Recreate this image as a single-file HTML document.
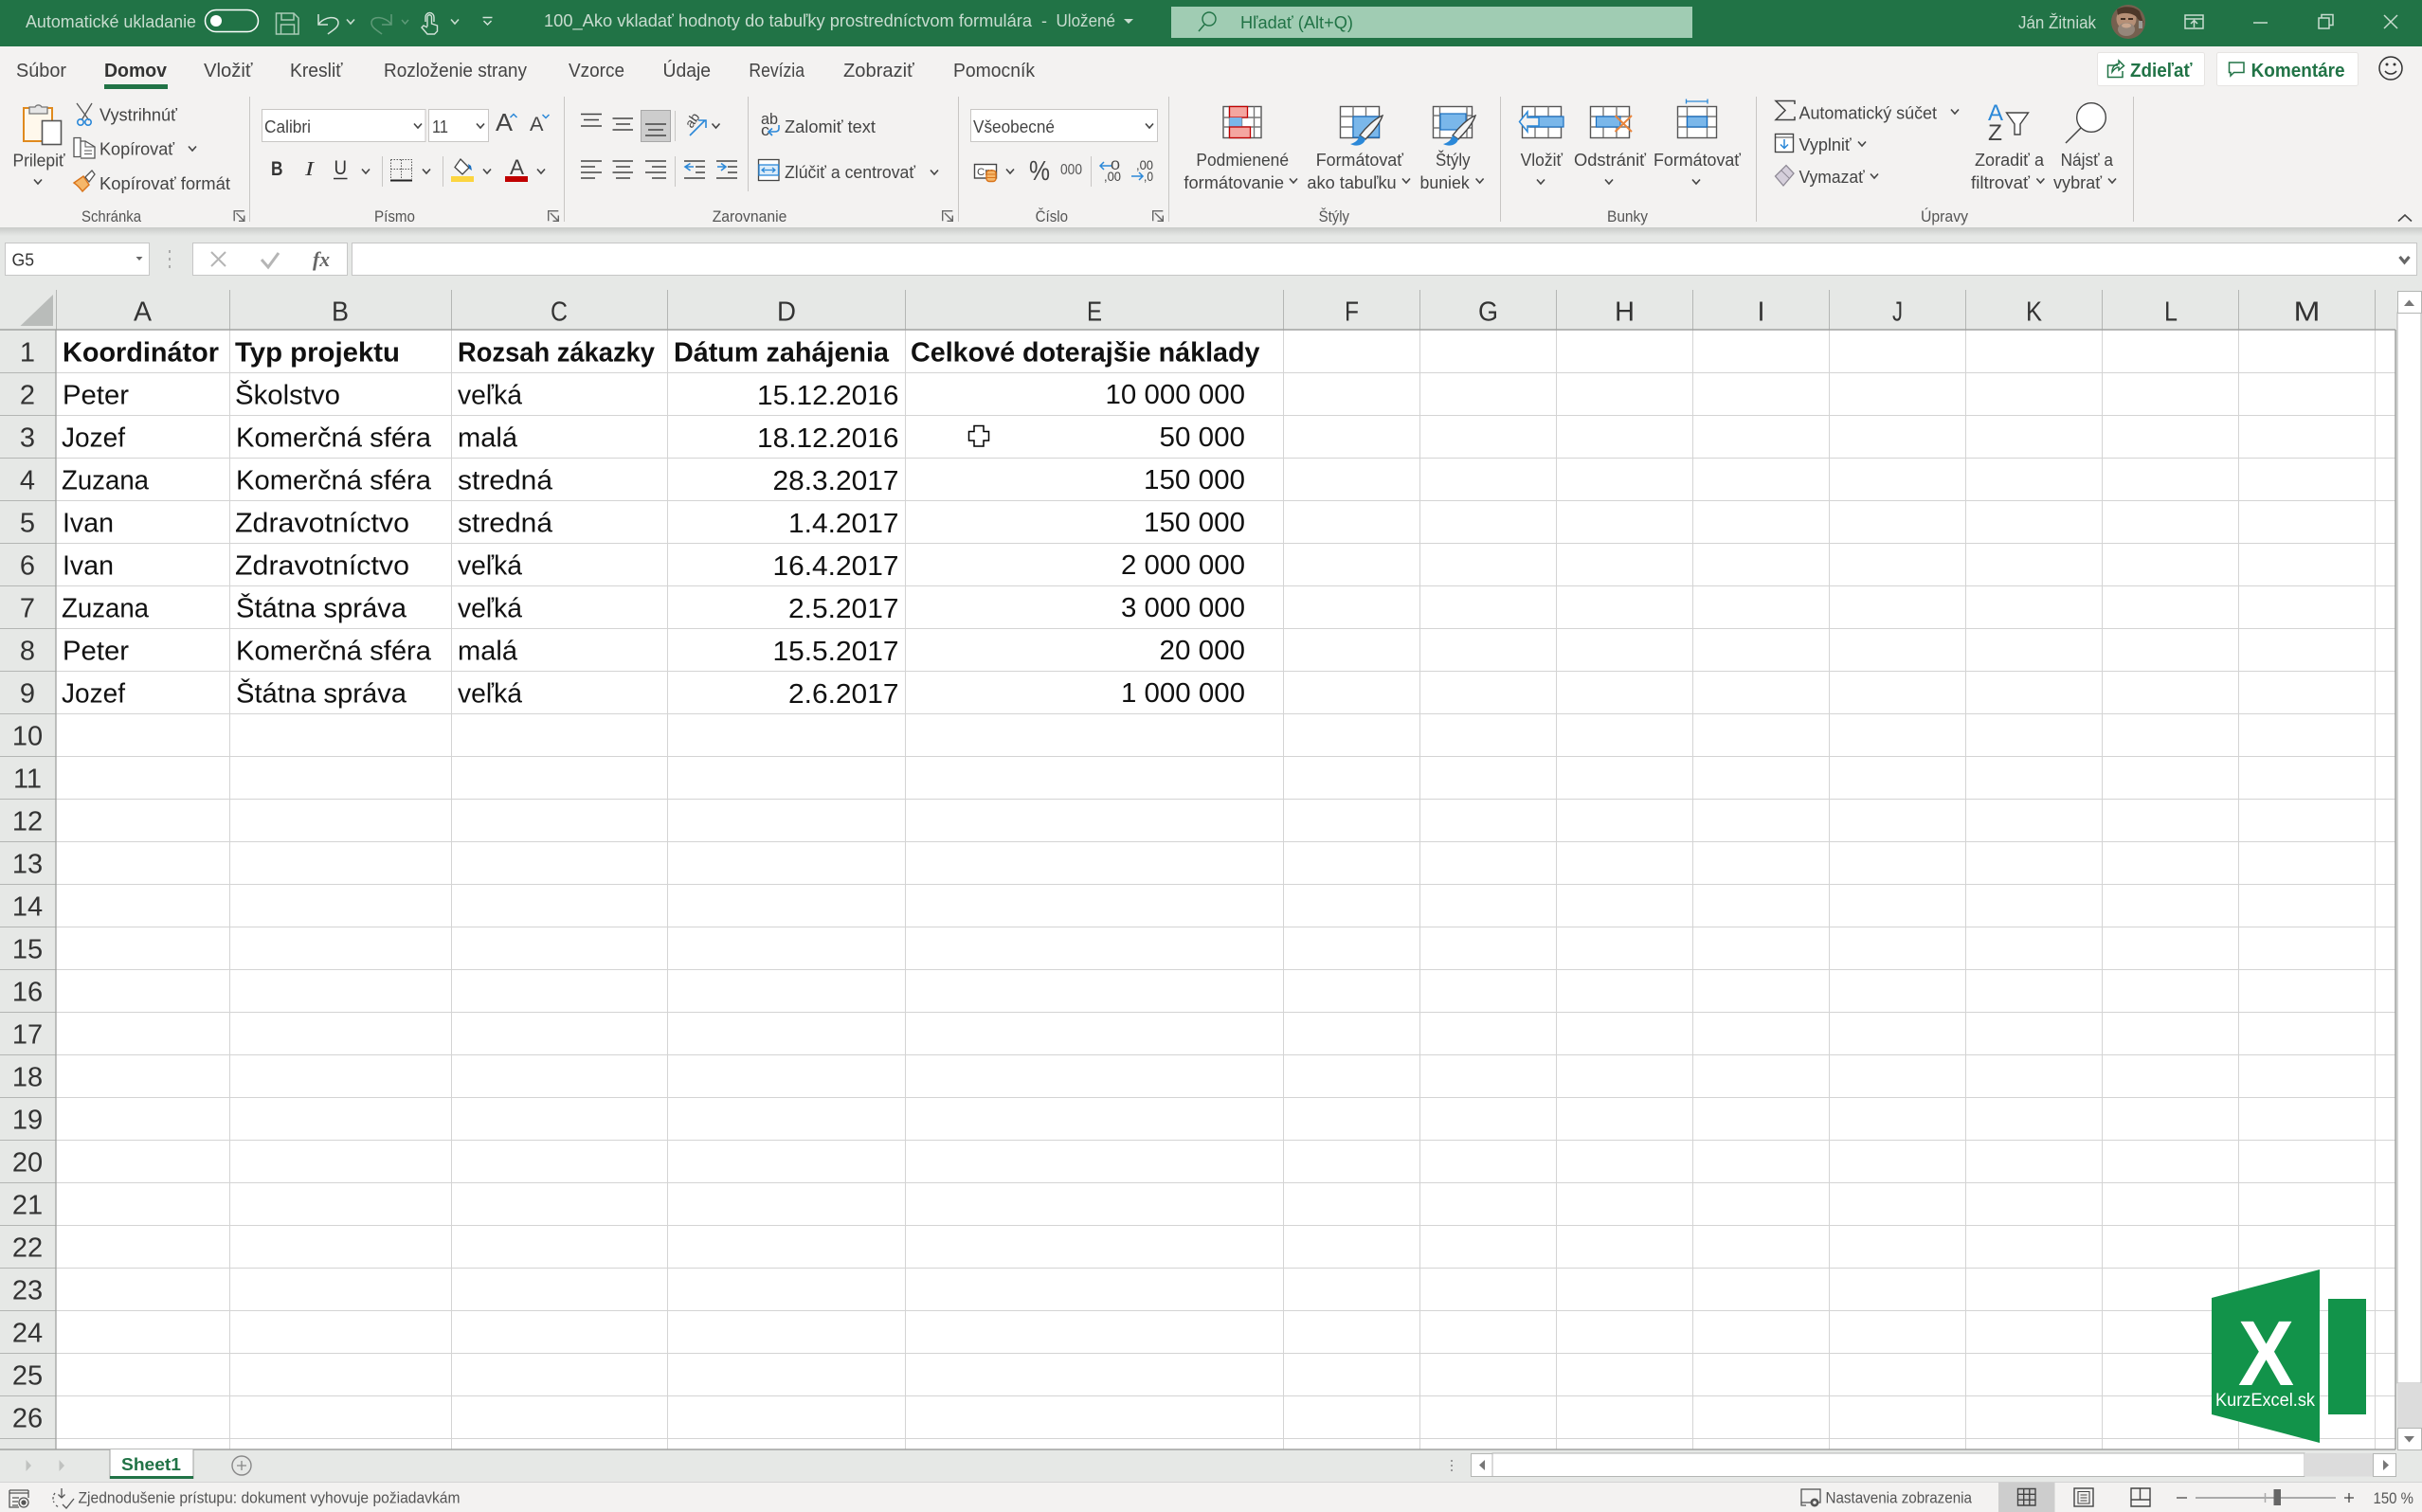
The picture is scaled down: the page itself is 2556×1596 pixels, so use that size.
<!DOCTYPE html>
<html lang="sk"><head><meta charset="utf-8"><title>Excel</title>
<style>
html,body{margin:0;padding:0;background:#fff;width:2556px;height:1596px;overflow:hidden}
svg{display:block}
text{font-family:"Liberation Sans",sans-serif;white-space:pre}
.r text{font-size:18px;fill:#444}
.t text{font-size:18px;fill:#c8dccf}
.m text{font-size:20px;fill:#444}
.g text{font-size:16.5px;fill:#555}
.c text{font-size:29px;fill:#111}
.b text{font-weight:bold}
.h text{font-size:29px;fill:#333}
.s text{font-size:16.5px;fill:#555}
</style></head><body>
<svg xmlns="http://www.w3.org/2000/svg" width="2556" height="1596" viewBox="0 0 2556 1596">
<defs>
<path id="v" d="M-4-2.5 0 2 4-2.5" fill="none" stroke="#444" stroke-width="1.6"/>
<path id="vt" d="M-4-2.5 0 2 4-2.5" fill="none" stroke="#c8dccf" stroke-width="1.6"/>
<g id="dl" fill="none" stroke="#666" stroke-width="1.4"><path d="M.7 11.3V.7H11.3M3 3 11 11M11.3 5.5V11.3H5.5"/></g>
<linearGradient id="sh" x1="0" y1="0" x2="0" y2="1"><stop offset="0" stop-color="#c9cbc9"/><stop offset="1" stop-color="#e6e8e6"/></linearGradient>
</defs>

<!-- backgrounds -->
<rect width="2556" height="1596" fill="#e6e8e6"/>
<rect width="2556" height="49" fill="#217346"/>
<rect y="49" width="2556" height="191" fill="#f3f2f1"/>
<rect y="240" width="2556" height="9" fill="url(#sh)"/>

<!-- title bar -->
<g class="t">
<text x="27" y="29" textLength="180" lengthAdjust="spacingAndGlyphs">Automatické ukladanie</text>
<text x="574" y="28" textLength="515" lengthAdjust="spacingAndGlyphs">100_Ako vkladať hodnoty do tabuľky prostredníctvom formulára</text>
<text x="1099" y="28" textLength="6" lengthAdjust="spacingAndGlyphs">-</text>
<text x="1114.5" y="28" textLength="62.5" lengthAdjust="spacingAndGlyphs">Uložené</text>
<text x="2130" y="30" textLength="82" lengthAdjust="spacingAndGlyphs">Ján Žitniak</text>
</g>
<rect x="216.500" y="10.500" width="56" height="23" rx="11.500" fill="#217346" stroke="#fff" stroke-width="1.500"/>
<circle cx="228" cy="22" r="6" fill="#fff"/>
<g fill="none" stroke="#a9cbb6" stroke-width="1.500">
<path d="M291.500 14H310L315 19V36H291.500Z"/><path d="M297 14V21H310V14M296.500 36V26H310.500V36"/>
</g>
<g fill="none" stroke="#d3e3d9" stroke-width="1.500"><path d="M336 15V26H346M336 26C342 17 357 16 357 24C357 30 349 33 346 36"/></g>
<use href="#vt" x="370" y="23"/>
<g fill="none" stroke="#5f9a78" stroke-width="1.500"><path d="M413 15V26H403M413 26C407 17 392 16 392 24C392 30 400 33 403 36"/><path d="M424 21 427.500 25 431 21"/></g>
<path d="M449 23V18a4.500 4.500 0 0 1 9 0V23M451 28V18a2.200 2.200 0 0 1 4.500 0V25l6 2V33l-3 3H451l-6-7 2-2 4 2" fill="none" stroke="#d3e3d9" stroke-width="1.400"/>
<use href="#vt" x="480" y="23"/>
<path d="M509.500 18.500H519.500M510.500 22 514.500 26 518.500 22" fill="none" stroke="#d3e3d9" stroke-width="1.500"/>
<path d="M1186 20H1196L1191 25Z" fill="#c8dccf"/>

<!-- search -->
<rect x="1236" y="7" width="550" height="33" fill="#a0ccb3"/>
<circle cx="1276" cy="20" r="7" fill="none" stroke="#217346" stroke-width="1.400"/>
<path d="M1271 26 1265 33" stroke="#217346" stroke-width="1.500"/>
<text x="1309" y="30" font-size="18" fill="#217346" textLength="119" lengthAdjust="spacingAndGlyphs">Hľadať (Alt+Q)</text>

<!-- avatar -->
<ellipse cx="2246" cy="23" rx="18" ry="18" fill="#75604f"/>
<ellipse cx="2244" cy="20" rx="10.500" ry="11" fill="#b58f76"/>
<ellipse cx="2244" cy="31" rx="9" ry="7" fill="#95867a"/>
<ellipse cx="2244" cy="27" rx="5" ry="2.500" fill="#c9a68e"/>
<path d="M2234 10C2240 6 2252 6 2258 12L2262 24 2256 20C2254 14 2240 12 2235 16Z" fill="#4d382a"/>
<rect x="2238" y="19" width="5" height="2" fill="#3f2d22"/><rect x="2246" y="19" width="5" height="2" fill="#3f2d22"/>
<rect x="2257" y="22" width="4" height="8" fill="#9a9a94"/>

<!-- window controls -->
<g fill="none" stroke="#c8dccf" stroke-width="1.500">
<rect x="2306" y="16" width="19" height="14"/><path d="M2306 20H2325M2315.500 29V22M2312 25 2315.500 21.500 2319 25"/>
<path d="M2378 24H2393"/>
<rect x="2447" y="19" width="11" height="11"/><path d="M2450 19V15.500H2462V26.500H2458"/>
<path d="M2516 16 2530 30M2530 16 2516 30"/>
</g>

<!-- menu tabs -->
<g class="m">
<text x="17" y="81" textLength="53" lengthAdjust="spacingAndGlyphs">Súbor</text>
<text x="215" y="81" textLength="51.500" lengthAdjust="spacingAndGlyphs">Vložiť</text>
<text x="306" y="81" textLength="55.500" lengthAdjust="spacingAndGlyphs">Kresliť</text>
<text x="405" y="81" textLength="151" lengthAdjust="spacingAndGlyphs">Rozloženie strany</text>
<text x="600" y="81" textLength="59" lengthAdjust="spacingAndGlyphs">Vzorce</text>
<text x="699.500" y="81" textLength="50.500" lengthAdjust="spacingAndGlyphs">Údaje</text>
<text x="790.400" y="81" textLength="58.600" lengthAdjust="spacingAndGlyphs">Revízia</text>
<text x="890" y="81" textLength="74.700" lengthAdjust="spacingAndGlyphs">Zobraziť</text>
<text x="1006" y="81" textLength="86" lengthAdjust="spacingAndGlyphs">Pomocník</text>
</g>
<text x="110" y="81" font-size="20" font-weight="bold" fill="#333" textLength="66" lengthAdjust="spacingAndGlyphs">Domov</text>
<rect x="110" y="89" width="67" height="5" fill="#217346"/>

<!-- share / comments -->
<rect x="2213.500" y="55.500" width="113" height="35" rx="2" fill="#fff" stroke="#e6e4e2"/>
<rect x="2339.500" y="55.500" width="149" height="35" rx="2" fill="#fff" stroke="#e6e4e2"/>
<text x="2248" y="81" font-size="20" font-weight="bold" fill="#217346" textLength="65.500" lengthAdjust="spacingAndGlyphs">Zdieľať</text>
<text x="2375.600" y="81" font-size="20" font-weight="bold" fill="#217346" textLength="99" lengthAdjust="spacingAndGlyphs">Komentáre</text>
<g fill="none" stroke="#217346" stroke-width="1.500">
<path d="M2235 69H2224.500V81.500H2240V75"/><path d="M2229 76C2229 70 2233 67.500 2236 67.500V64L2241.500 69.500 2236 74V71C2233 71 2231 73 2229 76Z"/>
<path d="M2352.500 66H2368V76.500H2357.500L2354 80V76.500H2352.500Z"/>
</g>
<ellipse cx="2523" cy="72" rx="12" ry="12" fill="none" stroke="#333" stroke-width="1.500"/>
<circle cx="2519" cy="68" r="1.500" fill="#333"/><circle cx="2527" cy="68" r="1.500" fill="#333"/>
<path d="M2517 75C2520 79 2526 79 2529 75" fill="none" stroke="#333" stroke-width="1.500"/>

<!-- group separators -->
<path d="M263.500 102V234M595.500 102V234M1011.500 102V234M1233.500 102V234M1583.500 102V234M1853.500 102V234M2251.500 102V234" stroke="#c8c6c4"/>

<!-- group labels -->
<g class="g">
<text x="86" y="234" textLength="63" lengthAdjust="spacingAndGlyphs">Schránka</text>
<text x="395" y="234" textLength="43" lengthAdjust="spacingAndGlyphs">Písmo</text>
<text x="751.700" y="234" textLength="78.700" lengthAdjust="spacingAndGlyphs">Zarovnanie</text>
<text x="1092.600" y="234" textLength="34.400" lengthAdjust="spacingAndGlyphs">Číslo</text>
<text x="1391.600" y="234" textLength="32.400" lengthAdjust="spacingAndGlyphs">Štýly</text>
<text x="1696" y="234" textLength="43" lengthAdjust="spacingAndGlyphs">Bunky</text>
<text x="2027" y="234" textLength="50" lengthAdjust="spacingAndGlyphs">Úpravy</text>
</g>
<use href="#dl" x="246.500" y="222"/><use href="#dl" x="578" y="222"/><use href="#dl" x="994" y="222"/><use href="#dl" x="1216" y="222"/>
<path d="M2531 233.500 2538 227 2545 233.500" fill="none" stroke="#444" stroke-width="1.600"/>

<!-- clipboard -->
<rect x="25" y="114" width="30" height="35" fill="#fff8ec" stroke="#e08a1e" stroke-width="2"/>
<path d="M31 120V113H37a4 4 0 0 1 7 0H50V120Z" fill="#e6e6e6" stroke="#777" stroke-width="1.300"/>
<rect x="44.500" y="127.500" width="20" height="25" fill="#fff" stroke="#555" stroke-width="1.600"/>
<path d="M81 109 94 127M97 109 86 127" stroke="#555" stroke-width="1.300" fill="none"/>
<circle cx="85" cy="129" r="3.200" fill="none" stroke="#2b88d8" stroke-width="1.600"/><circle cx="93" cy="129" r="3.200" fill="none" stroke="#2b88d8" stroke-width="1.600"/>
<path d="M78 145.500H85V165.500H78ZM85 149H90L100 155V167H85" fill="#fff" stroke="#555" stroke-width="1.300"/><path d="M90 149V155H100M89 159H97M89 162.500H97" fill="none" stroke="#555"/>
<path d="M78 193 88 186 94 195 87 202C84 198 81 195 78 193Z" fill="#f5b76a" stroke="#d9741a" stroke-width="1.400"/>
<path d="M90 187 97 180 100 184 94 192Z" fill="#fff" stroke="#555" stroke-width="1.300"/>
<g class="r">
<text x="13.500" y="175.500" textLength="55" lengthAdjust="spacingAndGlyphs">Prilepiť</text>
<text x="105" y="127.500" textLength="82" lengthAdjust="spacingAndGlyphs">Vystrihnúť</text>
<text x="105" y="163.500" textLength="79" lengthAdjust="spacingAndGlyphs">Kopírovať</text>
<text x="105" y="200" textLength="138" lengthAdjust="spacingAndGlyphs">Kopírovať formát</text>
</g>
<use href="#v" x="40" y="192"/><use href="#v" x="203" y="157"/>

<!-- font -->
<rect x="276.500" y="115.500" width="172.500" height="34" fill="#fff" stroke="#c8c6c4"/>
<rect x="452.500" y="115.500" width="63" height="34" fill="#fff" stroke="#c8c6c4"/>
<g class="r"><text x="279" y="140" textLength="49" lengthAdjust="spacingAndGlyphs">Calibri</text><text x="456" y="140" textLength="17" lengthAdjust="spacingAndGlyphs">11</text></g>
<use href="#v" x="441" y="133"/><use href="#v" x="507" y="133"/>
<text x="523" y="138" font-size="26" fill="#444" textLength="18" lengthAdjust="spacingAndGlyphs">A</text>
<path d="M538.500 124 542 120.500 545.500 124" fill="none" stroke="#2b88d8" stroke-width="1.500"/>
<text x="559" y="138" font-size="21" fill="#444" textLength="14.500" lengthAdjust="spacingAndGlyphs">A</text>
<path d="M572.500 121 576 124.500 579.500 121" fill="none" stroke="#2b88d8" stroke-width="1.500"/>
<text x="286" y="185" font-size="21" font-weight="bold" fill="#333" textLength="12.500" lengthAdjust="spacingAndGlyphs">B</text>
<text x="322" y="185" font-size="21" font-style="italic" fill="#333" style="font-family:'Liberation Serif',serif" textLength="9" lengthAdjust="spacingAndGlyphs">I</text>
<text x="352.500" y="184" font-size="21" fill="#333" textLength="13.500" lengthAdjust="spacingAndGlyphs">U</text>
<path d="M352 188.500H366.500" stroke="#333" stroke-width="1.500"/>
<use href="#v" x="386" y="181"/>
<path d="M403.500 165V197M467.500 165V197" stroke="#c8c6c4"/>
<path d="M412.500 168.500H434.500V189M412.500 168.500V189M423.500 168.500V189M412.500 178.500H434.500" fill="none" stroke="#555" stroke-dasharray="1.500 1.500"/>
<path d="M412 190.500H435" stroke="#222" stroke-width="2"/>
<use href="#v" x="450" y="181"/>
<path d="M486 168 495 177 488 184 480 176.500Z" fill="#fff" stroke="#444" stroke-width="1.300"/>
<path d="M494 173 497 175 498 180 495 178Z" fill="#1a6fc0"/>
<rect x="476" y="186" width="24" height="6" fill="#fcd53f"/>
<use href="#v" x="514" y="181"/>
<text x="538" y="184" font-size="22" fill="#444" textLength="15" lengthAdjust="spacingAndGlyphs">A</text>
<rect x="533" y="186" width="24" height="6" fill="#c00000"/>
<use href="#v" x="571" y="181"/>

<!-- alignment -->
<g stroke="#444" stroke-width="1.500" fill="none">
<path d="M613 120.500H635M616 126.500H632M613 133H635"/>
<path d="M646.500 125H668M650 131H665M646.500 137H668"/>
<path d="M613 170H635M613 176H628M613 182H635M613 188H628"/>
<path d="M646.500 170H668M650 176H665M646.500 182H668M650 188H665"/>
<path d="M681 170H703M688 176H703M681 182H703M688 188H703"/>
<path d="M722 170H744M734 176H744M734 182H744M722 188H744"/>
<path d="M756 170H778M768 176H778M768 182H778M756 188H778"/>
</g>
<rect x="676.500" y="116.500" width="31" height="33" fill="#cdcdcd" stroke="#a8a8a8"/>
<path d="M681 131H703M684 137H700M681 143H703" stroke="#444" stroke-width="1.500"/>
<path d="M712.500 117V149M712.500 165V197M789.500 102V202" stroke="#c8c6c4"/>
<path d="M723 176H732M728.500 172.500 723 176 728.500 180" fill="none" stroke="#2b88d8" stroke-width="1.600"/>
<path d="M757 176H766M761 172.500 766 176 761 180" fill="none" stroke="#2b88d8" stroke-width="1.600"/>
<text transform="translate(730 136) rotate(-55)" font-size="14" fill="#444">ab</text>
<path d="M728 143 744 127M737 127H745V135" fill="none" stroke="#2b88d8" stroke-width="1.600"/>
<use href="#v" x="755.500" y="133"/>
<text x="803" y="131" font-size="17" fill="#444" textLength="18" lengthAdjust="spacingAndGlyphs">ab</text>
<text x="803" y="143" font-size="17" fill="#444" textLength="9" lengthAdjust="spacingAndGlyphs">c</text>
<path d="M822 132V135.500Q822 139 818 139H811M815 135.500 811 139 815 143" fill="none" stroke="#2b88d8" stroke-width="1.600"/>
<g class="r"><text x="828" y="140" textLength="96" lengthAdjust="spacingAndGlyphs">Zalomiť text</text><text x="828" y="188" textLength="138" lengthAdjust="spacingAndGlyphs">Zlúčiť a centrovať</text></g>
<rect x="800.500" y="168.500" width="21.500" height="22" fill="#fff" stroke="#444" stroke-width="1.300"/>
<rect x="801" y="174" width="20.500" height="11" fill="#dcecf9" stroke="#2b88d8" stroke-width="1.300"/>
<path d="M804 179.500H818M807 177 804 179.500 807 182M815 177 818 179.500 815 182" fill="none" stroke="#2b88d8" stroke-width="1.200"/>
<use href="#v" x="986" y="182"/>

<!-- number -->
<rect x="1024.500" y="115.500" width="197" height="34" fill="#fff" stroke="#c8c6c4"/>
<g class="r"><text x="1027" y="140" textLength="86" lengthAdjust="spacingAndGlyphs">Všeobecné</text></g>
<use href="#v" x="1213" y="133"/>
<rect x="1028.500" y="173.500" width="23" height="14.500" fill="#fff" stroke="#444" stroke-width="1.400"/>
<text x="1031" y="185" font-size="11" fill="#444" textLength="18" lengthAdjust="spacingAndGlyphs">Cm</text>
<rect x="1041" y="180" width="10" height="11.500" rx="3" fill="#f5b76a" stroke="#d9741a" stroke-width="1.400"/>
<path d="M1041 184H1051M1041 187.500H1051" stroke="#d9741a"/>
<use href="#v" x="1066" y="181"/>
<text x="1086" y="190" font-size="29" fill="#444" textLength="22" lengthAdjust="spacingAndGlyphs">%</text>
<text x="1119" y="184" font-size="16" fill="#555" textLength="23" lengthAdjust="spacingAndGlyphs">000</text>
<path d="M1151.500 165V197" stroke="#c8c6c4"/>
<text x="1172" y="179" font-size="14" fill="#444" textLength="10" lengthAdjust="spacingAndGlyphs">0</text>
<text x="1165" y="191" font-size="14" fill="#444" textLength="18" lengthAdjust="spacingAndGlyphs">,00</text>
<path d="M1161 175H1173M1165 171 1161 175 1165 179" fill="none" stroke="#2b88d8" stroke-width="1.500"/>
<text x="1199" y="179" font-size="14" fill="#444" textLength="18" lengthAdjust="spacingAndGlyphs">,00</text>
<text x="1207" y="191" font-size="14" fill="#444" textLength="10" lengthAdjust="spacingAndGlyphs">,0</text>
<path d="M1194 186H1206M1202 182 1206 186 1202 190" fill="none" stroke="#2b88d8" stroke-width="1.500"/>

<!-- styles icons -->
<g fill="none" stroke="#555" stroke-width="1.400">
<rect x="1291" y="112.500" width="40" height="33" fill="#fff"/><path d="M1297.500 112.500V145M1310.500 112.500V145M1323.500 112.500V145M1291 124H1331M1291 134H1331" stroke="#777"/>
<rect x="1414.500" y="112.500" width="41" height="33" fill="#fff"/><path d="M1428 112.500V145M1441.500 112.500V145M1414.500 123H1455M1414.500 134H1455" stroke="#777"/>
<rect x="1512.500" y="112.500" width="41" height="33" fill="#fff"/><path d="M1519.500 112.500V145M1548 112.500V145M1512.500 122H1553M1512.500 135H1553" stroke="#777"/>
</g>
<rect x="1297.500" y="112.500" width="19" height="11.500" fill="#f4a6a0" stroke="#c00000" stroke-width="1.300"/>
<rect x="1297.500" y="124" width="13" height="10" fill="#7ab7ea"/>
<rect x="1297.500" y="134" width="22" height="11.500" fill="#f4a6a0" stroke="#c00000" stroke-width="1.300"/>
<rect x="1428" y="123" width="27.500" height="22" fill="#7ab7ea" stroke="#1a6fc0" stroke-width="1.200"/>
<path d="M1459 122C1451 125 1441 135 1435 143L1441 147C1448 140 1456 131 1459 122Z" fill="#f4f4f4" stroke="#444" stroke-width="1.400"/>
<path d="M1435 143C1433 149 1429 151 1425 152C1430 155 1439 154 1441 147Z" fill="#2b88d8"/>
<rect x="1520" y="120" width="27" height="17" fill="#7ab7ea" stroke="#1a6fc0" stroke-width="1.200"/>
<path d="M1557 122C1549 125 1539 135 1533 143L1539 147C1546 140 1554 131 1557 122Z" fill="#f4f4f4" stroke="#444" stroke-width="1.400"/>
<path d="M1533 143C1531 149 1527 151 1523 152C1528 155 1537 154 1539 147Z" fill="#2b88d8"/>
<g class="r">
<text x="1262.400" y="175" textLength="97.600" lengthAdjust="spacingAndGlyphs">Podmienené</text>
<text x="1249.400" y="199" textLength="105.600" lengthAdjust="spacingAndGlyphs">formátovanie</text>
<text x="1388.700" y="175" textLength="92.300" lengthAdjust="spacingAndGlyphs">Formátovať</text>
<text x="1379.400" y="199" textLength="94.300" lengthAdjust="spacingAndGlyphs">ako tabuľku</text>
<text x="1515" y="175" textLength="36.500" lengthAdjust="spacingAndGlyphs">Štýly</text>
<text x="1498.500" y="199" textLength="52.200" lengthAdjust="spacingAndGlyphs">buniek</text>
<text x="1604.600" y="175" textLength="44.400" lengthAdjust="spacingAndGlyphs">Vložiť</text>
<text x="1661" y="175" textLength="76" lengthAdjust="spacingAndGlyphs">Odstrániť</text>
<text x="1745" y="175" textLength="92" lengthAdjust="spacingAndGlyphs">Formátovať</text>
<text x="1898.500" y="125.500" textLength="145.500" lengthAdjust="spacingAndGlyphs">Automatický súčet</text>
<text x="1898.500" y="159" textLength="55.200" lengthAdjust="spacingAndGlyphs">Vyplniť</text>
<text x="1898.500" y="193" textLength="69.200" lengthAdjust="spacingAndGlyphs">Vymazať</text>
<text x="2084" y="175" textLength="73" lengthAdjust="spacingAndGlyphs">Zoradiť a</text>
<text x="2080" y="199" textLength="62" lengthAdjust="spacingAndGlyphs">filtrovať</text>
<text x="2174.600" y="175" textLength="55.400" lengthAdjust="spacingAndGlyphs">Nájsť a</text>
<text x="2167" y="199" textLength="51" lengthAdjust="spacingAndGlyphs">vybrať</text>
</g>
<use href="#v" x="1365" y="191"/><use href="#v" x="1484" y="191"/><use href="#v" x="1561.600" y="191"/>
<use href="#v" x="1626" y="192"/><use href="#v" x="1698" y="192"/><use href="#v" x="1790" y="192"/>
<use href="#v" x="2063" y="118"/><use href="#v" x="1965" y="152"/><use href="#v" x="1978" y="186"/>
<use href="#v" x="2153.400" y="191"/><use href="#v" x="2229" y="191"/>

<!-- cells icons -->
<g fill="none" stroke="#555" stroke-width="1.400">
<rect x="1606.500" y="112.500" width="41" height="33" fill="#fff"/><path d="M1620 112.500V145M1634 112.500V145M1606.500 123H1647M1606.500 134H1647" stroke="#777"/>
<rect x="1678.500" y="112.500" width="41" height="33" fill="#fff"/><path d="M1692 112.500V145M1706 112.500V145M1678.500 123H1719M1678.500 134H1719" stroke="#777"/>
<rect x="1770.500" y="112.500" width="41" height="33" fill="#fff"/><path d="M1780.500 112.500V145M1801.500 112.500V145M1770.500 123H1811M1770.500 134H1811" stroke="#777"/>
</g>
<rect x="1615" y="123" width="35" height="11" fill="#7ab7ea" stroke="#1a6fc0" stroke-width="1.200"/>
<path d="M1612 118 1603.500 128.500 1612 139V133H1624V124H1612Z" fill="#f3f2f1" stroke="#2b88d8" stroke-width="1.500"/>
<rect x="1684.500" y="123" width="25.500" height="11" fill="#7ab7ea" stroke="#1a6fc0" stroke-width="1.200"/>
<path d="M1704.500 122 1722 139M1722 122 1704.500 139" stroke="#e8833a" stroke-width="2"/>
<rect x="1780.500" y="123" width="21" height="11" fill="#7ab7ea" stroke="#1a6fc0" stroke-width="1.300"/>
<path d="M1779.500 107H1802M1779.500 104.500V109.500M1802 104.500V109.500" fill="none" stroke="#2b88d8" stroke-width="1.300"/>

<!-- editing icons -->
<path d="M1894 110V106.500H1874L1884 116.500 1874 126.500H1894V123" fill="none" stroke="#444" stroke-width="1.500"/>
<rect x="1873.500" y="141.500" width="19" height="19" fill="#fff" stroke="#444" stroke-width="1.400"/><path d="M1873.500 145H1892.500" stroke="#444"/>
<path d="M1883 147V156M1879 152.500 1883 156.500 1887 152.500" fill="none" stroke="#2b88d8" stroke-width="1.500"/>
<path d="M1873.500 186 1885 174.500 1893 183 1882 196Z" fill="#d5cfdb" stroke="#8f8a96" stroke-width="1.300"/><path d="M1880 180 1888 188" stroke="#8f8a96"/>
<text x="2098" y="127" font-size="24" fill="#2b88d8" textLength="16" lengthAdjust="spacingAndGlyphs">A</text>
<text x="2098" y="148" font-size="24" fill="#444" textLength="15" lengthAdjust="spacingAndGlyphs">Z</text>
<path d="M2117.500 119H2140.500L2132 131V142H2126V131Z" fill="#fff" stroke="#444" stroke-width="1.400"/>
<circle cx="2207" cy="124" r="15.300" fill="#fff" stroke="#444" stroke-width="1.400"/>
<path d="M2196 135 2180 151" stroke="#444" stroke-width="1.500"/>

<!-- formula bar -->
<rect x="5.500" y="256.500" width="152" height="34" fill="#fff" stroke="#c6c6c6"/>
<text x="12.500" y="280.500" font-size="18" fill="#333" textLength="23.500" lengthAdjust="spacingAndGlyphs">G5</text>
<path d="M143.500 271H150.500L147 275Z" fill="#666"/>
<path d="M179 264V267M179 272V275M179 280V283" stroke="#aaa" stroke-width="2"/>
<rect x="203.500" y="256.500" width="163" height="34" fill="#fff" stroke="#c6c6c6"/>
<rect x="371.500" y="256.500" width="2179" height="34" fill="#fff" stroke="#c6c6c6"/>
<path d="M223 266 238 281M238 266 223 281" stroke="#b5b5b5" stroke-width="2"/>
<path d="M276 274 283 282 294 267" fill="none" stroke="#b5b5b5" stroke-width="3"/>
<text x="330" y="281" font-size="22" font-style="italic" font-weight="bold" fill="#666" style="font-family:'Liberation Serif',serif" textLength="18" lengthAdjust="spacingAndGlyphs">fx</text>
<path d="M2532.500 271 2537.500 277 2542.500 271" fill="none" stroke="#666" stroke-width="3.200"/>

<!-- sheet -->
<rect x="59" y="348" width="2469" height="1182" fill="#fff"/>
<path d="M21.500 344H56V311Z" fill="#b9bcba"/>
<path d="M59.500 306V348M242.500 306V348M476.500 306V348M704.500 306V348M955.500 306V348M1354.500 306V348M1498.500 306V348M1642.500 306V348M1786.500 306V348M1930.500 306V348M2074.500 306V348M2218.500 306V348M2362.500 306V348M2506.500 306V348" stroke="#b4b6b4"/>
<path d="M242.500 348V1530M476.500 348V1530M704.500 348V1530M955.500 348V1530M1354.500 348V1530M1498.500 348V1530M1642.500 348V1530M1786.500 348V1530M1930.500 348V1530M2074.500 348V1530M2218.500 348V1530M2362.500 348V1530M2506.500 348V1530" stroke="#d4d4d4"/>
<path d="M59 393.500H2528M59 438.500H2528M59 483.500H2528M59 528.500H2528M59 573.500H2528M59 618.500H2528M59 663.500H2528M59 708.500H2528M59 753.500H2528M59 798.500H2528M59 843.500H2528M59 888.500H2528M59 933.500H2528M59 978.500H2528M59 1023.500H2528M59 1068.500H2528M59 1113.500H2528M59 1158.500H2528M59 1203.500H2528M59 1248.500H2528M59 1293.500H2528M59 1338.500H2528M59 1383.500H2528M59 1428.500H2528M59 1473.500H2528M59 1518.500H2528" stroke="#d4d4d4"/>
<path d="M0 393.500H59M0 438.500H59M0 483.500H59M0 528.500H59M0 573.500H59M0 618.500H59M0 663.500H59M0 708.500H59M0 753.500H59M0 798.500H59M0 843.500H59M0 888.500H59M0 933.500H59M0 978.500H59M0 1023.500H59M0 1068.500H59M0 1113.500H59M0 1158.500H59M0 1203.500H59M0 1248.500H59M0 1293.500H59M0 1338.500H59M0 1383.500H59M0 1428.500H59M0 1473.500H59M0 1518.500H59" stroke="#b4b6b4"/>
<path d="M0 348H2528" stroke="#a0a2a0" stroke-width="1.500"/>
<path d="M59 348V1530" stroke="#a0a2a0" stroke-width="1.300"/>

<!-- column headers -->
<g class="h">
<text x="141" y="338.500" textLength="19" lengthAdjust="spacingAndGlyphs">A</text>
<text x="350" y="338.500" textLength="18" lengthAdjust="spacingAndGlyphs">B</text>
<text x="581" y="338.500" textLength="18" lengthAdjust="spacingAndGlyphs">C</text>
<text x="820" y="338.500" textLength="20" lengthAdjust="spacingAndGlyphs">D</text>
<text x="1147" y="338.500" textLength="16" lengthAdjust="spacingAndGlyphs">E</text>
<text x="1419" y="338.500" textLength="15" lengthAdjust="spacingAndGlyphs">F</text>
<text x="1560" y="338.500" textLength="21" lengthAdjust="spacingAndGlyphs">G</text>
<text x="1704" y="338.500" textLength="21" lengthAdjust="spacingAndGlyphs">H</text>
<text x="1854.500" y="338.500" textLength="8" lengthAdjust="spacingAndGlyphs">I</text>
<text x="1997" y="338.500" textLength="11" lengthAdjust="spacingAndGlyphs">J</text>
<text x="2138" y="338.500" textLength="17" lengthAdjust="spacingAndGlyphs">K</text>
<text x="2284" y="338.500" textLength="14" lengthAdjust="spacingAndGlyphs">L</text>
<text x="2420.500" y="338.500" textLength="28" lengthAdjust="spacingAndGlyphs">M</text>
</g>

<!-- row headers -->
<g class="h" text-anchor="middle">
<text x="29" y="381.500">1</text><text x="29" y="426.500">2</text><text x="29" y="471.500">3</text><text x="29" y="516.500">4</text><text x="29" y="561.500">5</text><text x="29" y="606.500">6</text><text x="29" y="651.500">7</text><text x="29" y="696.500">8</text><text x="29" y="741.500">9</text><text x="29" y="786.500">10</text><text x="29" y="831.500">11</text><text x="29" y="876.500">12</text><text x="29" y="921.500">13</text><text x="29" y="966.500">14</text><text x="29" y="1011.500">15</text><text x="29" y="1056.500">16</text><text x="29" y="1101.500">17</text><text x="29" y="1146.500">18</text><text x="29" y="1191.500">19</text><text x="29" y="1236.500">20</text><text x="29" y="1281.500">21</text><text x="29" y="1326.500">22</text><text x="29" y="1371.500">23</text><text x="29" y="1416.500">24</text><text x="29" y="1461.500">25</text><text x="29" y="1506.500">26</text>
</g>

<!-- cells -->
<g class="c b">
<text x="66" y="381.500" textLength="165" lengthAdjust="spacingAndGlyphs">Koordinátor</text>
<text x="248" y="381.500" textLength="174" lengthAdjust="spacingAndGlyphs">Typ projektu</text>
<text x="483" y="381.500" textLength="208" lengthAdjust="spacingAndGlyphs">Rozsah zákazky</text>
<text x="711" y="381.500" textLength="227" lengthAdjust="spacingAndGlyphs">Dátum zahájenia</text>
<text x="961" y="381.500" textLength="368.500" lengthAdjust="spacingAndGlyphs">Celkové doterajšie náklady</text>
</g>
<g class="c">
<text x="66" y="426.500" textLength="70" lengthAdjust="spacingAndGlyphs">Peter</text>
<text x="65" y="471.500" textLength="67" lengthAdjust="spacingAndGlyphs">Jozef</text>
<text x="65" y="516.500" textLength="92" lengthAdjust="spacingAndGlyphs">Zuzana</text>
<text x="66" y="561.500" textLength="54" lengthAdjust="spacingAndGlyphs">Ivan</text>
<text x="66" y="606.500" textLength="54" lengthAdjust="spacingAndGlyphs">Ivan</text>
<text x="65" y="651.500" textLength="92" lengthAdjust="spacingAndGlyphs">Zuzana</text>
<text x="66" y="696.500" textLength="70" lengthAdjust="spacingAndGlyphs">Peter</text>
<text x="65" y="741.500" textLength="67" lengthAdjust="spacingAndGlyphs">Jozef</text>

<text x="248" y="426.500" textLength="111" lengthAdjust="spacingAndGlyphs">Školstvo</text>
<text x="249" y="471.500" textLength="206" lengthAdjust="spacingAndGlyphs">Komerčná sféra</text>
<text x="249" y="516.500" textLength="206" lengthAdjust="spacingAndGlyphs">Komerčná sféra</text>
<text x="248" y="561.500" textLength="184" lengthAdjust="spacingAndGlyphs">Zdravotníctvo</text>
<text x="248" y="606.500" textLength="184" lengthAdjust="spacingAndGlyphs">Zdravotníctvo</text>
<text x="249" y="651.500" textLength="180" lengthAdjust="spacingAndGlyphs">Štátna správa</text>
<text x="249" y="696.500" textLength="206" lengthAdjust="spacingAndGlyphs">Komerčná sféra</text>
<text x="249" y="741.500" textLength="180" lengthAdjust="spacingAndGlyphs">Štátna správa</text>

<text x="483" y="426.500" textLength="68" lengthAdjust="spacingAndGlyphs">veľká</text>
<text x="483" y="471.500" textLength="63" lengthAdjust="spacingAndGlyphs">malá</text>
<text x="483" y="516.500" textLength="100" lengthAdjust="spacingAndGlyphs">stredná</text>
<text x="483" y="561.500" textLength="100" lengthAdjust="spacingAndGlyphs">stredná</text>
<text x="483" y="606.500" textLength="68" lengthAdjust="spacingAndGlyphs">veľká</text>
<text x="483" y="651.500" textLength="68" lengthAdjust="spacingAndGlyphs">veľká</text>
<text x="483" y="696.500" textLength="63" lengthAdjust="spacingAndGlyphs">malá</text>
<text x="483" y="741.500" textLength="68" lengthAdjust="spacingAndGlyphs">veľká</text>

<text x="799" y="427" textLength="149.500" lengthAdjust="spacingAndGlyphs">15.12.2016</text>
<text x="799" y="472" textLength="149.500" lengthAdjust="spacingAndGlyphs">18.12.2016</text>
<text x="815.500" y="517" textLength="133" lengthAdjust="spacingAndGlyphs">28.3.2017</text>
<text x="832" y="562" textLength="116.500" lengthAdjust="spacingAndGlyphs">1.4.2017</text>
<text x="815.500" y="607" textLength="133" lengthAdjust="spacingAndGlyphs">16.4.2017</text>
<text x="832" y="652" textLength="116.500" lengthAdjust="spacingAndGlyphs">2.5.2017</text>
<text x="815.500" y="697" textLength="133" lengthAdjust="spacingAndGlyphs">15.5.2017</text>
<text x="832" y="742" textLength="116.500" lengthAdjust="spacingAndGlyphs">2.6.2017</text>

<text x="1166.500" y="426" textLength="147.500" lengthAdjust="spacingAndGlyphs">10 000 000</text>
<text x="1223.500" y="471" textLength="90.500" lengthAdjust="spacingAndGlyphs">50 000</text>
<text x="1207" y="516" textLength="107" lengthAdjust="spacingAndGlyphs">150 000</text>
<text x="1207" y="561" textLength="107" lengthAdjust="spacingAndGlyphs">150 000</text>
<text x="1183" y="606" textLength="131" lengthAdjust="spacingAndGlyphs">2 000 000</text>
<text x="1183" y="651" textLength="131" lengthAdjust="spacingAndGlyphs">3 000 000</text>
<text x="1223.500" y="696" textLength="90.500" lengthAdjust="spacingAndGlyphs">20 000</text>
<text x="1183" y="741" textLength="131" lengthAdjust="spacingAndGlyphs">1 000 000</text>
</g>

<!-- cursor -->
<path d="M1028 449.500H1038V455.500H1043.500V465H1038V471H1028V465H1022.500V455.500H1028Z" fill="#fff" stroke="#000" stroke-width="1.500"/>

<!-- logo -->
<path d="M2334 1370 2448 1340V1523L2334 1493Z" fill="#12934a"/>
<rect x="2457" y="1371" width="40" height="122" fill="#12934a"/>
<text x="2362" y="1462" font-size="97" font-weight="bold" fill="#fff" textLength="59" lengthAdjust="spacingAndGlyphs">X</text>
<text x="2338" y="1484" font-size="19" fill="#fff" textLength="105" lengthAdjust="spacingAndGlyphs">KurzExcel.sk</text>

<!-- vertical scrollbar -->
<rect x="2528" y="306" width="28" height="1258" fill="#e6e8e6"/>
<path d="M2528 348V1530" stroke="#a0a2a0" stroke-width="1.500"/>
<rect x="2530" y="330" width="25" height="1130" fill="#fff" stroke="#b4b6b4"/>
<rect x="2530" y="1460" width="26" height="47" fill="#dcdcdc"/>
<rect x="2530.500" y="307.500" width="25" height="23" fill="#fff" stroke="#b4b6b4"/>
<path d="M2537 323H2548L2542.500 316.500Z" fill="#777"/>
<rect x="2530.500" y="1507.500" width="25" height="23" fill="#fff" stroke="#b4b6b4"/>
<path d="M2537 1516H2548L2542.500 1522.500Z" fill="#777"/>

<!-- tabs -->
<rect y="1530" width="2530" height="34" fill="#e6e8e6"/>
<path d="M0 1530H2528" stroke="#a0a2a0" stroke-width="1.500"/>
<path d="M33 1547 27.500 1541V1553ZM62.500 1541 68 1547 62.500 1553Z" fill="#c0c2c0"/>
<rect x="116" y="1530" width="88" height="31" fill="#fff"/>
<path d="M116 1530V1561M204 1530V1561" stroke="#a0a2a0"/>
<rect x="116" y="1558" width="88" height="3" fill="#217346"/>
<text x="128" y="1552" font-size="18" font-weight="bold" fill="#217346" textLength="63" lengthAdjust="spacingAndGlyphs">Sheet1</text>
<circle cx="255" cy="1547" r="10" fill="none" stroke="#888" stroke-width="1.400"/>
<path d="M250 1547H260M255 1542V1552" stroke="#888" stroke-width="1.300"/>
<path d="M1532 1541V1543M1532 1546V1548M1532 1551V1553" stroke="#999" stroke-width="2"/>
<rect x="1552.500" y="1534.500" width="23" height="24" fill="#fff" stroke="#b4b6b4"/>
<path d="M1567 1541V1552L1561 1546.500Z" fill="#777"/>
<rect x="1575" y="1534" width="857" height="24.500" fill="#fff" stroke="#b4b6b4"/>
<rect x="2432" y="1534" width="72" height="24.500" fill="#dcdcdc"/>
<rect x="2504.500" y="1534.500" width="24" height="24" fill="#fff" stroke="#b4b6b4"/>
<path d="M2515 1541V1552L2521 1546.500Z" fill="#777"/>

<!-- status bar -->
<rect y="1564" width="2556" height="32" fill="#f3f2f1"/>
<path d="M0 1564.500H2556" stroke="#d4d4d4"/>
<g fill="none" stroke="#555" stroke-width="1.300">
<path d="M10 1573H30M10 1576H30M10 1573V1591H20M30 1573V1581M13 1581H20M13 1585H19M13 1589H19"/>
<circle cx="25" cy="1586" r="5"/><circle cx="25" cy="1586" r="2" fill="#555"/>
<path d="M65 1571V1581M61.500 1577.500 65 1581 68.500 1577.500" />
<path d="M58 1576A9.500 9.500 0 0 0 57 1586M59 1589 62 1591" stroke-dasharray="2.500 2"/>
<path d="M66 1588 70 1592 78 1582"/>
<rect x="1901" y="1572" width="20" height="14"/><path d="M1906 1589H1901V1586"/>
</g>
<circle cx="1915" cy="1586" r="4.500" fill="#555"/><circle cx="1915" cy="1586" r="1.800" fill="#f3f2f1"/>
<g class="s">
<text x="82.500" y="1586.500" textLength="403" lengthAdjust="spacingAndGlyphs">Zjednodušenie prístupu: dokument vyhovuje požiadavkám</text>
<text x="1926.500" y="1586.500" textLength="154.500" lengthAdjust="spacingAndGlyphs">Nastavenia zobrazenia</text>
<text x="2504.500" y="1587" textLength="42.500" lengthAdjust="spacingAndGlyphs">150 %</text>
</g>
<rect x="2109" y="1565" width="59.500" height="31" fill="#cdcdcd"/>
<path d="M2129.500 1571.500H2148V1589H2129.500ZM2135.700 1571.500V1589M2141.800 1571.500V1589M2129.500 1577.300H2148M2129.500 1583.200H2148" fill="none" stroke="#444" stroke-width="1.400"/>
<rect x="2189" y="1571" width="20" height="19" fill="none" stroke="#444" stroke-width="1.400"/>
<path d="M2193 1574.500H2205V1587H2193ZM2195.500 1578H2202.500M2195.500 1581H2202.500M2195.500 1584H2202.500" fill="none" stroke="#444" stroke-width="1.100"/>
<path d="M2249 1571H2269V1590H2249ZM2249 1583H2269M2258.500 1571V1583" fill="none" stroke="#444" stroke-width="1.400"/>
<path d="M2297 1581H2308M2474 1581H2484M2479 1576V1586" stroke="#444" stroke-width="1.300"/>
<path d="M2317 1581H2465" stroke="#aaa" stroke-width="2"/>
<path d="M2390.500 1576V1586" stroke="#aaa" stroke-width="1.500"/>
<rect x="2399.500" y="1572" width="7.500" height="17" fill="#666"/>
</svg>
</body></html>
